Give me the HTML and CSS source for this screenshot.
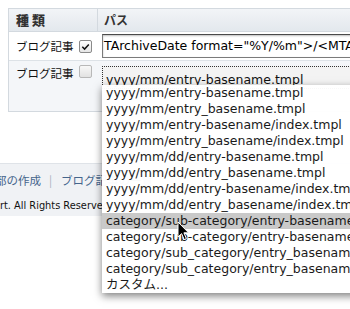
FILE: index.html
```html
<!DOCTYPE html>
<html lang="ja">
<head>
  <meta charset="UTF-8">
  <title>アーカイブマッピング</title>
  <link rel="stylesheet" href="styles.css">
</head>
<body>
  <div class="page">
    <div class="maps">
      <div class="row head">
        <div class="c1"><span class="kind">種類</span></div>
        <div class="c2">パス</div>
      </div>
      <div class="row r1">
        <div class="c1">
          <span class="type">ブログ記事</span>
          <span class="cb">
            <svg width="12" height="12" viewBox="0 0 12 12"><path d="M2.5 5.8 L5 8.3 L9.6 3.2" fill="none" stroke="#111" stroke-width="1.6"/></svg>
          </span>
        </div>
        <div class="c2"><div class="field">TArchiveDate format="%Y/%m"&gt;/&lt;MTArchiveFile&gt;</div></div>
      </div>
      <div class="row r2">
        <div class="c1">
          <span class="type">ブログ記事</span>
          <span class="cb off"></span>
        </div>
        <div class="c2"><div class="select">yyyy/mm/entry-basename.tmpl</div></div>
      </div>
    </div>

    <div class="footer">
      <div class="links"><a class="cut">部の作成</a><span class="sep">|</span><a>ブログ記事の一覧</a></div>
      <div class="copy">rt. All Rights Reserved.</div>
    </div>

    <!-- 開いているプルダウン -->
    <ul class="menu">
      <li>yyyy/mm/entry-basename.tmpl</li>
      <li>yyyy/mm/entry_basename.tmpl</li>
      <li>yyyy/mm/entry-basename/index.tmpl</li>
      <li>yyyy/mm/entry_basename/index.tmpl</li>
      <li>yyyy/mm/dd/entry-basename.tmpl</li>
      <li>yyyy/mm/dd/entry_basename.tmpl</li>
      <li>yyyy/mm/dd/entry-basename/index.tmpl</li>
      <li>yyyy/mm/dd/entry_basename/index.tmpl</li>
      <li class="hover">category/sub-category/entry-basename.tmpl</li>
      <li>category/sub-category/entry-basename/index.tmpl</li>
      <li>category/sub_category/entry_basename.tmpl</li>
      <li>category/sub_category/entry_basename/index.tmpl</li>
      <li>カスタム...</li>
    </ul>

    <svg class="cursor" width="13" height="20" viewBox="0 0 13 20">
      <path d="M1 1 L1 16 L4.6 12.6 L7.2 18.6 L9.4 17.6 L6.9 11.8 L11.6 11.8 Z" fill="#000" stroke="#fff" stroke-width="1"/>
    </svg>
  </div>
</body>
</html>
```

FILE: styles.css
```css
html, body {
  margin: 0;
  padding: 0;
  overflow: hidden;
}

body {
  background: #fff;
  font-family: "DejaVu Sans", "Noto Sans CJK JP", sans-serif;
  color: #222;
}

.page {
  position: relative;
  width: 350px;
  height: 309px;
  overflow: hidden;
}

/* マッピングの表 */
.maps {
  margin: 8px 0 0 8px;
  width: 420px;
  border-top: 1px solid #d3d9df;
  border-left: 1px solid #d3d9df;
  border-bottom: 1px solid #d3d9df;
}

.row {
  display: flex;
}

.c1 {
  width: 81px;
  flex: none;
  padding-left: 7px;
  display: flex;
  align-items: center;
}

.c2 {
  flex: 1;
  padding-left: 5px;
}

.head {
  height: 22px;
  background: linear-gradient(#f2f4f7, #e3e8ed);
  border-bottom: 1px solid #d3d9df;
  font-family: "Noto Sans CJK JP", sans-serif;
  font-size: 12px;
  font-weight: bold;
  color: #333;
  line-height: 22px;
}

.head .c1 {
  border-right: 1px solid #d3d9df;
  align-items: flex-start;
}

.head .c2 {
  padding-left: 6px;
}

.kind {
  font-size: 13px;
  font-weight: 900;
  letter-spacing: 3px;
}

.type {
  font-family: "Noto Sans CJK JP", sans-serif;
  font-size: 11.5px;
  color: #111;
}

.cb {
  margin-left: 5px;
  width: 11px;
  height: 11px;
  border: 1px solid #8a8a8a;
  border-radius: 2px;
  background: linear-gradient(#fff, #e6e6e6);
  display: flex;
}

.cb.off {
  border-color: #b8b8b8;
  background: linear-gradient(#f8f8f8, #e2e2e2);
}

.r1 {
  height: 28px;
  border-bottom: 1px solid #dde2e7;
}

.field {
  margin-top: 2px;
  height: 22px;
  line-height: 22px;
  border: 1px solid #7b7b7b;
  border-top-color: #4a4a4a;
  box-shadow: inset 0 1px 2px rgba(0, 0, 0, 0.25);
  padding-left: 1px;
  font-size: 12.5px;
  color: #000;
  white-space: nowrap;
  overflow: hidden;
}

.r2 {
  height: 50px;
  background: #f4f6f9;
}

.r2 .c1 {
  align-items: flex-start;
  padding-top: 4px;
  height: 20px;
}

.select {
  margin-top: 5px;
  height: 21px;
  line-height: 25px;
  padding-left: 3px;
  border: 1px dotted #333;
  background: #f3f3f3;
  font-size: 12.5px;
  color: #111;
  white-space: nowrap;
}

/* フッター */
.footer {
  margin-top: 51px;
  height: 52px;
  border-top: 1px solid #dfe3e8;
  background: #f0f2f5;
}

.links {
  padding-top: 8px;
  height: 21px;
  font-family: "Noto Sans CJK JP", sans-serif;
  font-size: 11.5px;
  color: #45658c;
  white-space: nowrap;
}

.links .cut {
  margin-left: -5px;
}

.sep {
  color: #a9b3bf;
  margin: 0 9px 0 8px;
}

.copy {
  padding-top: 6px;
  font-size: 9.8px;
  color: #111;
  white-space: nowrap;
  line-height: 14px;
}

/* プルダウンメニュー */
.menu {
  position: absolute;
  left: 102px;
  top: 85px;
  width: 270px;
  margin: 0;
  padding: 0;
  list-style: none;
  background: rgba(255, 255, 255, 0.97);
  box-shadow: 0 3px 8px rgba(0, 0, 0, 0.5);
}

.menu li {
  height: 16px;
  line-height: 16px;
  padding-left: 4px;
  font-size: 12.5px;
  color: #1a1a1a;
  white-space: nowrap;
}

.menu li.hover {
  background: #c9c9c9;
}

.cursor {
  position: absolute;
  left: 177px;
  top: 221px;
}
```
